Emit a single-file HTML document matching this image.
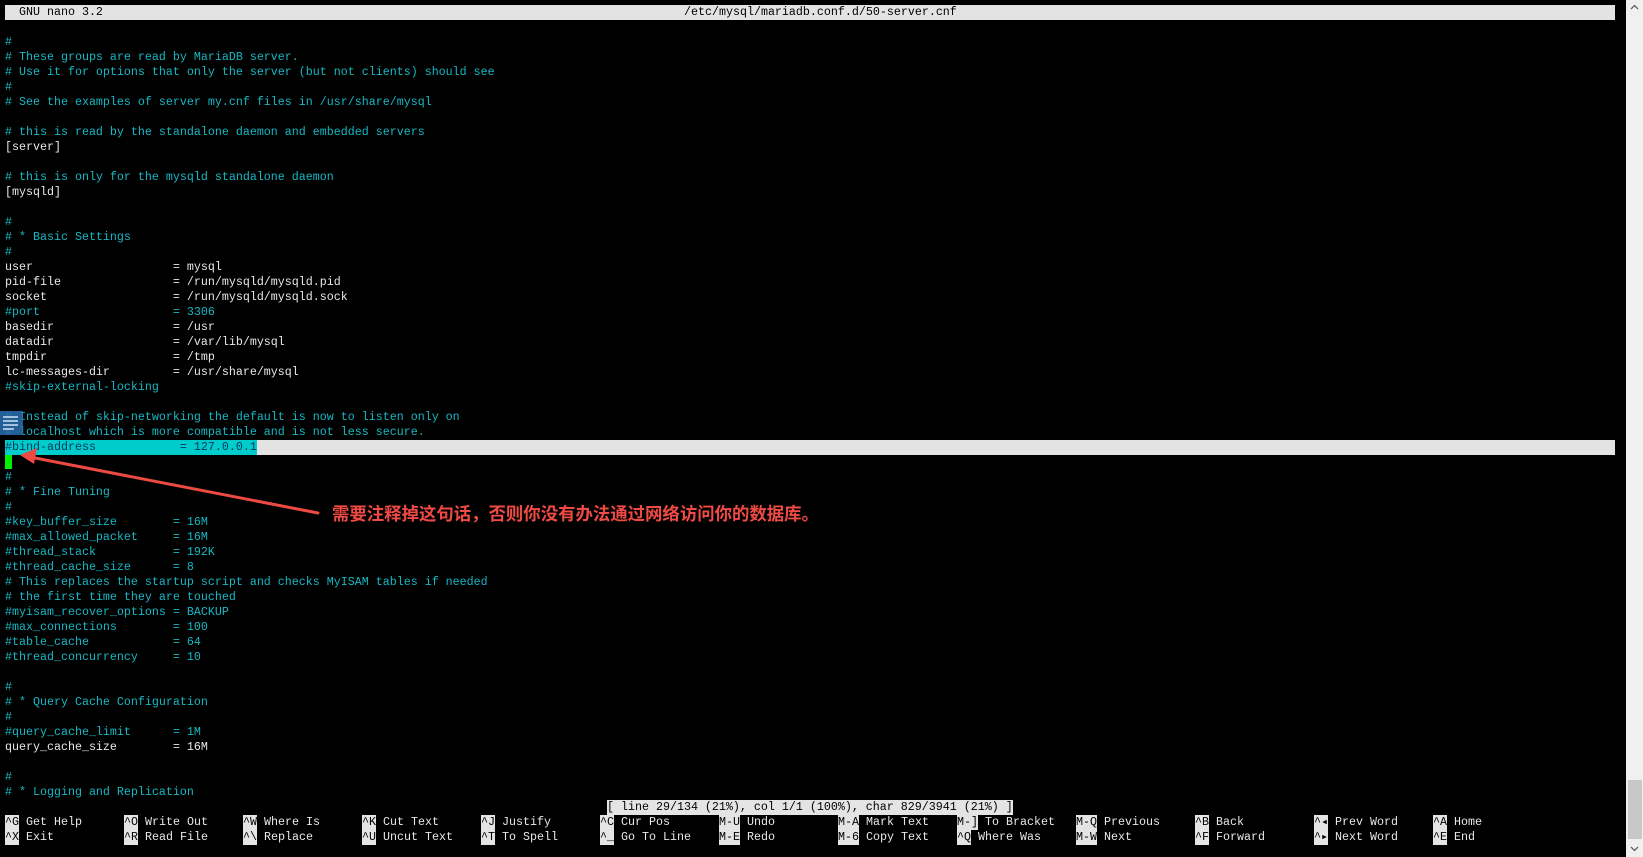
<!DOCTYPE html>
<html><head><meta charset="utf-8"><style>
html,body{margin:0;padding:0;background:#000;width:1643px;height:857px;overflow:hidden;position:relative}
.r{position:absolute;left:5px;height:15px;line-height:15px;font-family:"Liberation Mono",monospace;font-size:11.67px;white-space:pre;color:#16b8c4}
.w{color:#e8e8e8}
.k{position:absolute;height:15px;line-height:15px;font-family:"Liberation Mono",monospace;font-size:11.67px;white-space:pre}
.kb{background:#e4e4e4;color:#000}
.kl{color:#e8e8e8}
</style></head><body>
<div style="position:absolute;left:5px;top:5px;width:1610px;height:15px;background:#e3e3e3"></div>
<div class="r" style="top:5px;color:#000">  GNU nano 3.2</div>
<div class="r" style="top:5px;left:684px;color:#000">/etc/mysql/mariadb.conf.d/50-server.cnf</div>

<div class="r" style="top:35px">#</div>
<div class="r" style="top:50px"># These groups are read by MariaDB server.</div>
<div class="r" style="top:65px"># Use it for options that only the server (but not clients) should see</div>
<div class="r" style="top:80px">#</div>
<div class="r" style="top:95px"># See the examples of server my.cnf files in /usr/share/mysql</div>
<div class="r" style="top:125px"># this is read by the standalone daemon and embedded servers</div>
<div class="r w" style="top:140px">[server]</div>
<div class="r" style="top:170px"># this is only for the mysqld standalone daemon</div>
<div class="r w" style="top:185px">[mysqld]</div>
<div class="r" style="top:215px">#</div>
<div class="r" style="top:230px"># * Basic Settings</div>
<div class="r" style="top:245px">#</div>
<div class="r w" style="top:260px">user                    = mysql</div>
<div class="r w" style="top:275px">pid-file                = /run/mysqld/mysqld.pid</div>
<div class="r w" style="top:290px">socket                  = /run/mysqld/mysqld.sock</div>
<div class="r" style="top:305px">#port                   = 3306</div>
<div class="r w" style="top:320px">basedir                 = /usr</div>
<div class="r w" style="top:335px">datadir                 = /var/lib/mysql</div>
<div class="r w" style="top:350px">tmpdir                  = /tmp</div>
<div class="r w" style="top:365px">lc-messages-dir         = /usr/share/mysql</div>
<div class="r" style="top:380px">#skip-external-locking</div>
<div class="r" style="top:410px"># Instead of skip-networking the default is now to listen only on</div>
<div class="r" style="top:425px"># localhost which is more compatible and is not less secure.</div>
<div style="position:absolute;left:5px;top:440px;width:1610px;height:15px;background:#e3e3e3"></div>
<div class="r" style="top:440px;background:#00cccc;color:#063a60">#bind-address            = 127.0.0.1</div>
<div style="position:absolute;left:5px;top:455px;width:7px;height:14px;background:#00ee00"></div>
<div class="r" style="top:470px">#</div>
<div class="r" style="top:485px"># * Fine Tuning</div>
<div class="r" style="top:500px">#</div>
<div class="r" style="top:515px">#key_buffer_size        = 16M</div>
<div class="r" style="top:530px">#max_allowed_packet     = 16M</div>
<div class="r" style="top:545px">#thread_stack           = 192K</div>
<div class="r" style="top:560px">#thread_cache_size      = 8</div>
<div class="r" style="top:575px"># This replaces the startup script and checks MyISAM tables if needed</div>
<div class="r" style="top:590px"># the first time they are touched</div>
<div class="r" style="top:605px">#myisam_recover_options = BACKUP</div>
<div class="r" style="top:620px">#max_connections        = 100</div>
<div class="r" style="top:635px">#table_cache            = 64</div>
<div class="r" style="top:650px">#thread_concurrency     = 10</div>
<div class="r" style="top:680px">#</div>
<div class="r" style="top:695px"># * Query Cache Configuration</div>
<div class="r" style="top:710px">#</div>
<div class="r" style="top:725px">#query_cache_limit      = 1M</div>
<div class="r w" style="top:740px">query_cache_size        = 16M</div>
<div class="r" style="top:770px">#</div>
<div class="r" style="top:785px"># * Logging and Replication</div>

<div class="k kb" style="left:607px;top:800px">[ line 29/134 (21%), col 1/1 (100%), char 829/3941 (21%) ]</div>

<div class="k kb" style="left:5px;top:815px">^G</div><div class="k kl" style="left:26px;top:815px">Get Help</div>
<div class="k kb" style="left:5px;top:830px">^X</div><div class="k kl" style="left:26px;top:830px">Exit</div>
<div class="k kb" style="left:124px;top:815px">^O</div><div class="k kl" style="left:145px;top:815px">Write Out</div>
<div class="k kb" style="left:124px;top:830px">^R</div><div class="k kl" style="left:145px;top:830px">Read File</div>
<div class="k kb" style="left:243px;top:815px">^W</div><div class="k kl" style="left:264px;top:815px">Where Is</div>
<div class="k kb" style="left:243px;top:830px">^\</div><div class="k kl" style="left:264px;top:830px">Replace</div>
<div class="k kb" style="left:362px;top:815px">^K</div><div class="k kl" style="left:383px;top:815px">Cut Text</div>
<div class="k kb" style="left:362px;top:830px">^U</div><div class="k kl" style="left:383px;top:830px">Uncut Text</div>
<div class="k kb" style="left:481px;top:815px">^J</div><div class="k kl" style="left:502px;top:815px">Justify</div>
<div class="k kb" style="left:481px;top:830px">^T</div><div class="k kl" style="left:502px;top:830px">To Spell</div>
<div class="k kb" style="left:600px;top:815px">^C</div><div class="k kl" style="left:621px;top:815px">Cur Pos</div>
<div class="k kb" style="left:600px;top:830px">^_</div><div class="k kl" style="left:621px;top:830px">Go To Line</div>
<div class="k kb" style="left:719px;top:815px">M-U</div><div class="k kl" style="left:747px;top:815px">Undo</div>
<div class="k kb" style="left:719px;top:830px">M-E</div><div class="k kl" style="left:747px;top:830px">Redo</div>
<div class="k kb" style="left:838px;top:815px">M-A</div><div class="k kl" style="left:866px;top:815px">Mark Text</div>
<div class="k kb" style="left:838px;top:830px">M-6</div><div class="k kl" style="left:866px;top:830px">Copy Text</div>
<div class="k kb" style="left:957px;top:815px">M-]</div><div class="k kl" style="left:985px;top:815px">To Bracket</div>
<div class="k kb" style="left:957px;top:830px">^Q</div><div class="k kl" style="left:978px;top:830px">Where Was</div>
<div class="k kb" style="left:1076px;top:815px">M-Q</div><div class="k kl" style="left:1104px;top:815px">Previous</div>
<div class="k kb" style="left:1076px;top:830px">M-W</div><div class="k kl" style="left:1104px;top:830px">Next</div>
<div class="k kb" style="left:1195px;top:815px">^B</div><div class="k kl" style="left:1216px;top:815px">Back</div>
<div class="k kb" style="left:1195px;top:830px">^F</div><div class="k kl" style="left:1216px;top:830px">Forward</div>
<div class="k kb" style="left:1314px;top:815px">^◂</div><div class="k kl" style="left:1335px;top:815px">Prev Word</div>
<div class="k kb" style="left:1314px;top:830px">^▸</div><div class="k kl" style="left:1335px;top:830px">Next Word</div>
<div class="k kb" style="left:1433px;top:815px">^A</div><div class="k kl" style="left:1454px;top:815px">Home</div>
<div class="k kb" style="left:1433px;top:830px">^E</div><div class="k kl" style="left:1454px;top:830px">End</div>

<!-- scrollbar -->
<div style="position:absolute;left:1626px;top:0;width:17px;height:857px;background:#f0f0f0"></div>
<div style="position:absolute;left:1628px;top:780px;width:14px;height:59px;background:#c8c8c8"></div>
<svg style="position:absolute;left:1626px;top:0" width="17" height="857"><path d="M5 9 L8.5 5.5 L12 9" stroke="#606060" stroke-width="1.3" fill="none"/><path d="M5 847 L8.5 850.5 L12 847" stroke="#606060" stroke-width="1.3" fill="none"/></svg>

<!-- blue icon -->
<div style="position:absolute;left:0;top:411px;width:23px;height:24px;background:#2a6fb0;opacity:.85"></div>
<svg style="position:absolute;left:0;top:411px" width="23" height="24"><g stroke="#cfe0f0" stroke-width="1.5"><path d="M3 6H18M3 10H18M3 14H18M3 18H14"/></g></svg>

<!-- arrow -->
<svg style="position:absolute;left:0;top:0" width="400" height="560">
<line x1="318" y1="513" x2="30" y2="457" stroke="#ec4a42" stroke-width="3" stroke-linecap="round"/>
<path d="M20 455 L37 448 L34 464 Z" fill="#ec4a42"/>
</svg>
<div style="position:absolute;left:332px;top:503px;font-family:'Noto Sans CJK SC',sans-serif;font-weight:bold;font-size:17.4px;line-height:22px;color:#ef4a44;white-space:nowrap">需要注释掉这句话，否则你没有办法通过网络访问你的数据库。</div>
</body></html>
